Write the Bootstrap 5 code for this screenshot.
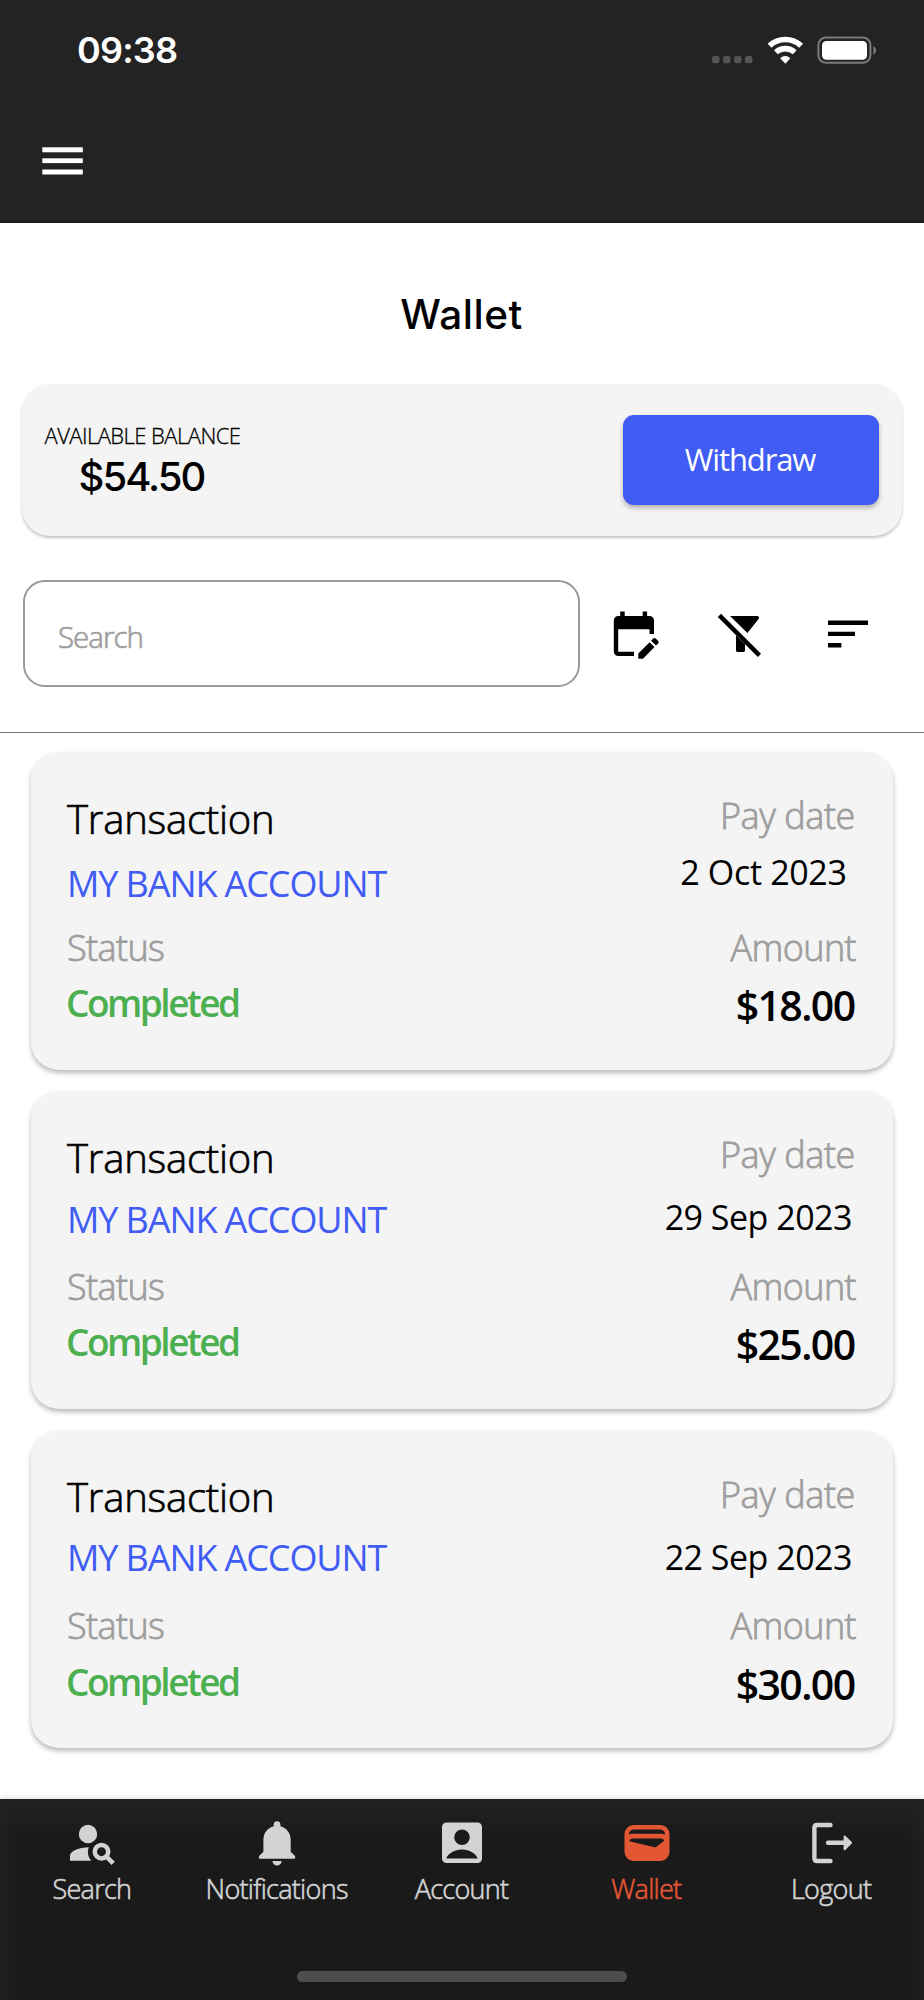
<!DOCTYPE html>
<html lang="en">
<head>
<meta charset="utf-8">
<meta name="viewport" content="width=device-width, initial-scale=1">
<title>Wallet</title>
<link href="https://cdn.jsdelivr.net/npm/bootstrap@5.3.0/dist/css/bootstrap.min.css" rel="stylesheet">
<style>
  body { font-family: "Open Sans", "Noto Sans", sans-serif; color: #000; background: #fff; }
  .screen { height: 2000px; overflow: hidden; }
  svg { display: block; flex: none; }
  .app-header { height: 223px; background: #232323; border-bottom: 1px solid #161616; }
  .status-bar { height: 101px; padding: 0 47px 0 77px; }
  .clock { font: 600 36px/101px "Inter", sans-serif; letter-spacing: -.8px; }
  .menu-btn { padding: 46px 0 0 42px; }
  .page-title { font: 500 40.5px/60px "Inter", sans-serif; letter-spacing: .5px; padding: 62px 1px 0 0; height: 160.5px; margin: 0; text-align: center; }
  .balance { height: 152.5px; margin: 0 22px; padding: 0 23px 0 22.5px; border-radius: 28px; background: #f4f4f4; box-shadow: 0 2px 3px rgba(0,0,0,.24); }
  .balance-label { font-weight: 300; font-size: 22px; line-height: 30px; letter-spacing: -.55px; margin-top: 2px; -webkit-text-stroke: .3px; }
  .balance-sum { font: 500 40px/50px "Inter", sans-serif; letter-spacing: -1.97px; padding: 2px 2px 0 0; }
  .btn-withdraw { width: 256px; height: 89.5px; padding: 0 2px 1px 0; border: 0; border-radius: 11px; background: #405cf5; color: #fff; font-size: 31px; line-height: 40px; font-weight: 400; letter-spacing: -1.1px; box-shadow: 0 3px 5px rgba(0,0,0,.28); }
  .btn-withdraw:hover { background: #405cf5; color: #fff; }
  .tools { height: 197px; padding: 44px 0 0 23px; border-bottom: 1px solid #777; }
  .search-box { width: 557px; height: 107px; border: 2px solid #999; border-radius: 22px; padding: 5px 33px 0; font-size: 29.5px; font-weight: 300; letter-spacing: -1px; -webkit-text-stroke: .7px; }
  .search-box::placeholder { color: #9e9e9e; opacity: 1; }
  .tx-list { padding: 19px 31px 0; gap: 21.5px; }
  .tx { height: 317.75px; border-radius: 28px; background: #f4f4f4; padding: 1px 37px 0 36px; box-shadow: 0 3px 5px rgba(0,0,0,.28); }
  .tx-top { height: 170.5px; }
  .tx-kind { font-size: 40px; line-height: 50px; font-weight: 300; letter-spacing: -.2px; padding-top: 40.5px; -webkit-text-stroke: .7px; }
  .tx-bank { font-size: 36px; line-height: 48px; font-weight: 400; letter-spacing: -1.1px; color: #405cf5; padding-top: 16px; }
  .tx-label { font-size: 36px; line-height: 48px; font-weight: 300; letter-spacing: -.6px; color: #9e9e9e; -webkit-text-stroke: .8px; }
  .tx-status { font-size: 37px; line-height: 48px; font-weight: 600; letter-spacing: -2.5px; color: #4caf50; padding-top: 7.5px; margin-left: -1px; }
  .tx-top .tx-label { padding-top: 39px; letter-spacing: -.4px; margin-right: 1px; }
  .tx-date { font-size: 34px; line-height: 48px; letter-spacing: -.5px; padding-top: 14px; margin-right: 4px; }
  .tx-amount { font-size: 41px; line-height: 56px; font-weight: 600; letter-spacing: -1.6px; padding-top: 5.5px; margin-right: 1.5px; }
  .tx:first-child .tx-date { padding-top: 8.3px; margin-right: 9.5px; letter-spacing: -.35px; }
  .tx:nth-child(2) .tx-bank { padding-top: 13.5px; }
  .tx:nth-child(3) .tx-bank { padding-top: 12px; }
  .tab-bar { height: 201px; padding-top: 17px; color: #d3d3d3; position: relative;
    background: linear-gradient(to bottom, #222, #22222200 36px), linear-gradient(to right, #202020, #20202000 18px), linear-gradient(to left, #202020, #20202000 18px), #1a1a1a;
    box-shadow: 0 -1px 6px rgba(0,0,0,.13); }
  .tab { flex: 1 1 0; font-size: 27px; line-height: 38px; font-weight: 300; letter-spacing: -.7px; color: inherit; text-decoration: none; -webkit-text-stroke: .6px; }
  .tab span { padding-right: 1px; }
  .tab svg { -webkit-text-stroke: 0; }
  .tab.current { color: #e25634; }
  .home-pill { width: 330px; height: 11px; border-radius: 6px; background: #4d4d4d; margin-top: 63px; }
</style>
</head>
<body>
<div class="screen d-flex flex-column">
  <header class="app-header text-white">
    <div class="status-bar d-flex justify-content-between align-items-start">
      <div class="clock">09:38</div>
      <svg width="166" height="30" viewBox="711 35 166 30" style="margin-top:35px">
        <g fill="#555"><rect x="712" y="56" width="7.5" height="7.3" rx="2.2"/><rect x="723" y="56" width="7.5" height="7.3" rx="2.2"/><rect x="734" y="56" width="7.5" height="7.3" rx="2.2"/><rect x="745" y="56" width="7.5" height="7.3" rx="2.2"/></g>
        <g fill="none" stroke="#fff" stroke-width="5.6"><path d="M769.5 45.8a23 23 0 0 1 31.6 0"/><path d="M775.9 52.3a14 14 0 0 1 18.8 0"/></g>
        <path fill="#fff" d="M780.2 58.2q5.1-4.6 10.2 0l-5.1 5.5z"/>
        <rect x="818.4" y="37.5" width="52" height="25.2" rx="7.5" fill="none" stroke="#7b7b7b" stroke-width="2"/>
        <rect x="822" y="41" width="45" height="18.7" rx="4.5" fill="#fff"/>
        <path fill="#7b7b7b" d="M873.4 46q2.6 1.2 2.6 4.3t-2.6 4.6z"/>
      </svg>
    </div>
    <div class="menu-btn"><svg width="42" height="29" viewBox="42 147 42 29" fill="#fff"><rect x="42.3" y="147.3" width="40.5" height="5"/><rect x="42.3" y="158.3" width="40.5" height="4.8"/><rect x="42.3" y="169.5" width="40.5" height="5"/></svg></div>
  </header>

  <main class="flex-grow-1">
    <h1 class="page-title">Wallet</h1>
    <section class="balance d-flex justify-content-between align-items-center">
      <div class="d-flex flex-column align-items-center">
        <div class="balance-label">AVAILABLE BALANCE</div>
        <div class="balance-sum">$54.50</div>
      </div>
      <button class="btn btn-withdraw" type="button">Withdraw</button>
    </section>

    <section class="tools d-flex align-items-start">
      <input class="search-box form-control flex-grow-0 flex-shrink-0" type="text" placeholder="Search">
      <svg width="260" height="50" viewBox="610 608 260 50" style="margin:27.5px 0 0 30px;overflow:visible">
        <path fill-rule="evenodd" d="M620.2 611.5h4.5v4.5h18v-4.5h4.4v4.5h2.4a4.5 4.5 0 0 1 4.5 4.5V634h-4.5v-4.7H618.2v22.5H634v4.3h-15.7a4.5 4.5 0 0 1-4.5-4.5v-31.1a4.5 4.5 0 0 1 4.5-4.5h1.9z"/>
        <path d="M638.3 653.6l11.3-11.4 4.9 4.9-11.5 11.6h-4.7zM651.1 640.7l2.2-2.1q1.2-1 2.4 0l2.5 2.5q.9 1.2 0 2.3l-2.2 2.1z"/>
        <path d="M730 616.1h26.8q3.3.4 1.8 3l-11.2 14zM736 635.2l9 9v6.3q0 1.4-1.4 1.4h-6.2q-1.4 0-1.4-1.4z"/>
        <path d="M719.4 615.4l40 40" fill="none" stroke="#000" stroke-width="4.5"/>
        <path d="M828 620.4h40v4.5h-40zM828 631.8h27v4.3h-27zM828 642.9h13.4v4.5H828z"/>
      </svg>
    </section>

    <section class="tx-list d-flex flex-column">
      <article class="tx">
        <div class="tx-top d-flex justify-content-between">
          <div><div class="tx-kind">Transaction</div><div class="tx-bank">MY BANK ACCOUNT</div></div>
          <div class="text-end"><div class="tx-label">Pay date</div><div class="tx-date">2 Oct 2023</div></div>
        </div>
        <div class="d-flex justify-content-between">
          <div><div class="tx-label">Status</div><div class="tx-status">Completed</div></div>
          <div class="text-end"><div class="tx-label">Amount</div><div class="tx-amount">$18.00</div></div>
        </div>
      </article>
      <article class="tx">
        <div class="tx-top d-flex justify-content-between">
          <div><div class="tx-kind">Transaction</div><div class="tx-bank">MY BANK ACCOUNT</div></div>
          <div class="text-end"><div class="tx-label">Pay date</div><div class="tx-date">29 Sep 2023</div></div>
        </div>
        <div class="d-flex justify-content-between">
          <div><div class="tx-label">Status</div><div class="tx-status">Completed</div></div>
          <div class="text-end"><div class="tx-label">Amount</div><div class="tx-amount">$25.00</div></div>
        </div>
      </article>
      <article class="tx">
        <div class="tx-top d-flex justify-content-between">
          <div><div class="tx-kind">Transaction</div><div class="tx-bank">MY BANK ACCOUNT</div></div>
          <div class="text-end"><div class="tx-label">Pay date</div><div class="tx-date">22 Sep 2023</div></div>
        </div>
        <div class="d-flex justify-content-between">
          <div><div class="tx-label">Status</div><div class="tx-status">Completed</div></div>
          <div class="text-end"><div class="tx-label">Amount</div><div class="tx-amount">$30.00</div></div>
        </div>
      </article>
    </section>
  </main>

  <nav class="tab-bar d-flex flex-column align-items-center flex-shrink-0">
    <div class="d-flex w-100">
      <a class="tab d-flex flex-column align-items-center" href="#">
        <svg width="54" height="54" viewBox="65 1816 54 54" fill="currentColor"><circle cx="88" cy="1834" r="9.2"/><path d="M70 1860.8v-5c0-5 9-8.6 18.8-8.6-1.8 4.8-.7 9.8 2.5 13.6z"/><circle cx="101.5" cy="1851.7" r="6.7" fill="none" stroke="currentColor" stroke-width="4.5"/><path d="M106 1856.2l7.2 7.2" stroke="currentColor" stroke-width="4.5"/></svg>
        <span>Search</span>
      </a>
      <a class="tab d-flex flex-column align-items-center" href="#">
        <svg width="54" height="54" viewBox="250 1816 54 54" fill="currentColor"><path d="M273.7 1826.3v-1.7a3.35 3.35 0 0 1 6.7 0v1.7c6.3 1.7 10.3 7 10.3 13.7v11.8l4.3 4.2q.8 2.8-.8 2.8h-34.3q-1.6 0-.8-2.8l4.3-4.2V1840c0-6.7 4-12 10.3-13.7zM272.5 1861h9.1a4.55 4.55 0 0 1-9.1 0z"/></svg>
        <span>Notifications</span>
      </a>
      <a class="tab d-flex flex-column align-items-center" href="#">
        <svg width="54" height="54" viewBox="435 1816 54 54" fill="currentColor"><path fill-rule="evenodd" d="M446.5 1822.5h31a4.5 4.5 0 0 1 4.5 4.5v31.5a4.5 4.5 0 0 1-4.5 4.5h-31a4.5 4.5 0 0 1-4.5-4.5V1827a4.5 4.5 0 0 1 4.5-4.5zM462 1829.5a7.8 7.8 0 1 0 0 15.6 7.8 7.8 0 0 0 0-15.6zM446.3 1858.6h31.4c-1.5-5-8.5-9.1-15.7-9.1s-14.2 4.1-15.7 9.1z"/></svg>
        <span>Account</span>
      </a>
      <a class="tab current d-flex flex-column align-items-center" href="#">
        <svg width="54" height="54" viewBox="620 1816 54 54" fill="currentColor"><path fill-rule="evenodd" d="M633.5 1825h27a9 9 0 0 1 9 9v18a9 9 0 0 1-9 9h-27a9 9 0 0 1-9-9v-18a9 9 0 0 1 9-9zM628.9 1835q1.2-1.2 3-1.2h30q1.8 0 3.1 1.2 0-5.5-5.5-5.5h-25q-5.6 0-5.6 5.5zM629.3 1841.2q.6-2.7 3.7-2.7h28q2.4 0 3.2 2.3l-7.7 6q-.9.7-2 .4z"/></svg>
        <span>Wallet</span>
      </a>
      <a class="tab d-flex flex-column align-items-center" href="#">
        <svg width="54" height="54" viewBox="804 1816 54 54" fill="none" stroke="currentColor" stroke-width="4.4" stroke-linecap="round"><path d="M829.5 1825h-13.3q-2.8 0-2.8 2.8v30.4q0 2.8 2.8 2.8h13.3M827 1842.8h17"/><path d="M843.6 1836.5l6.5 6.3-6.5 6.4z" fill="currentColor" stroke-width="2" stroke-linejoin="round"/></svg>
        <span>Logout</span>
      </a>
    </div>
    <div class="home-pill"></div>
  </nav>
</div>
<script src="https://cdn.jsdelivr.net/npm/bootstrap@5.3.0/dist/js/bootstrap.bundle.min.js"></script>
</body>
</html>
